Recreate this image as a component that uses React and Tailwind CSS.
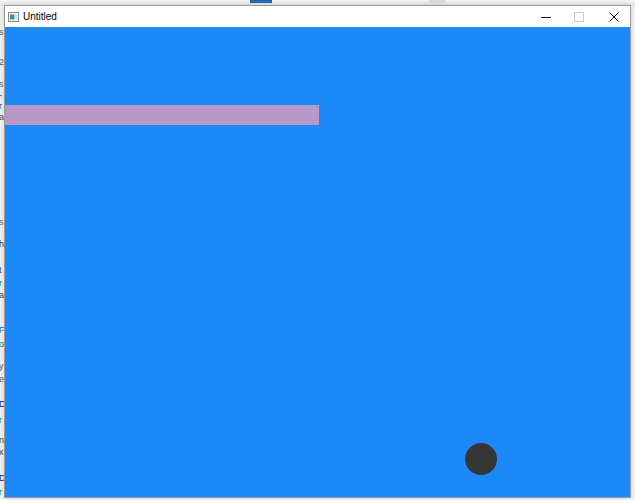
import React from "react";

const frags = [
  { t: "s", top: 28, c: "text-[#666]" },
  { t: "2", top: 58, c: "text-[#666]" },
  { t: "s", top: 80, c: "text-[#666]" },
  { t: "-", top: 91, c: "text-[#2a8a2a] font-bold" },
  { t: "r", top: 102, c: "text-[#444]" },
  { t: "a", top: 113, c: "text-[#444]" },
  { t: "s", top: 218, c: "text-[#666]" },
  { t: "h", top: 240, c: "text-[#333]" },
  { t: "t", top: 266, c: "text-[#1a3a8a]" },
  { t: "r", top: 279, c: "text-[#2a7a2a]" },
  { t: "a", top: 291, c: "text-[#444]" },
  { t: "F", top: 326, c: "text-[#2a7ab0]" },
  { t: "o", top: 340, c: "text-[#2a7a2a]" },
  { t: "y", top: 362, c: "text-[#555]" },
  { t: "e", top: 375, c: "text-[#555]" },
  { t: "D", top: 400, c: "text-[#1a1aa0]" },
  { t: "r", top: 416, c: "text-[#2a7a2a]" },
  { t: "n", top: 436, c: "text-[#444]" },
  { t: "x", top: 448, c: "text-[#444]" },
  { t: "D", top: 474, c: "text-[#1a1aa0]" },
  { t: "r", top: 488, c: "text-[#2a7a2a]" },
];

export default function App() {
  return (
    <div
      className="relative w-[635px] h-[500px] overflow-hidden bg-[#f4f4f4]"
      style={{ fontFamily: '"Liberation Sans", "Noto Sans", sans-serif' }}
    >
      {/* top strip of background window */}
      <div className="absolute left-0 top-0 w-[635px] h-[6px] bg-gradient-to-b from-[#f7f7f7] to-[#e4e4e4]">
        <div className="absolute left-[250px] top-0 w-[22px] h-[3px] bg-[#2f7fd1] border border-[#1a5fa8]" />
        <div className="absolute left-[424px] top-[-22px] w-[26px] h-[26px] rounded-full bg-[#dcdcdc]" />
      </div>

      {/* left edge text fragments of the page behind */}
      <div className="absolute left-0 top-0 w-[5px] h-[500px] overflow-hidden">
        {frags.map((f, i) => (
          <span
            key={i}
            className={`absolute left-[-1px] text-[9px] leading-none ${f.c}`}
            style={{ top: f.top }}
          >
            {f.t}
          </span>
        ))}
      </div>

      {/* the window */}
      <div className="absolute left-[4px] top-[5px] w-[627px] h-[493px] border border-[#9a9a9a] bg-white flex flex-col shadow-[0_0_6px_rgba(0,0,0,0.15)]">
        <div className="h-[21px] flex items-center bg-white">
          <svg width="11" height="10" viewBox="0 0 11 10" className="ml-[3px]">
            <rect x="0.5" y="0.5" width="10" height="9" fill="#f2f2f2" stroke="#8a8a8a" />
            <rect x="2" y="2.5" width="4.5" height="5" fill="#3d8f84" />
            <rect x="6.5" y="2.5" width="2.5" height="5" fill="#cfe0e0" />
          </svg>
          <span className="ml-[4px] text-[10px] text-black leading-none">Untitled</span>
          <div className="ml-auto flex items-center h-full">
            <div className="w-[29px] h-full flex items-center justify-center">
              <svg width="10" height="10" viewBox="0 0 10 10">
                <line x1="0" y1="5.5" x2="10" y2="5.5" stroke="#111" strokeWidth="1" />
              </svg>
            </div>
            <div className="w-[38px] h-full flex items-center justify-center">
              <svg width="10" height="10" viewBox="0 0 10 10">
                <rect x="0.5" y="0.5" width="9" height="9" fill="none" stroke="#cccccc" strokeWidth="1" />
              </svg>
            </div>
            <div className="w-[32px] h-full flex items-center justify-center">
              <svg width="10" height="10" viewBox="0 0 10 10">
                <path d="M0.5 0.5 L9.5 9.5 M9.5 0.5 L0.5 9.5" stroke="#111" strokeWidth="1" />
              </svg>
            </div>
          </div>
        </div>
        <div className="relative flex-1 bg-[#1d88f7]">
          <div className="absolute left-0 top-[78px] w-[314px] h-[20px] bg-[#b898c6]" />
          <div className="absolute left-[460px] top-[416px] w-[32px] h-[32px] rounded-full bg-[#363636]" />
        </div>
      </div>
    </div>
  );
}
